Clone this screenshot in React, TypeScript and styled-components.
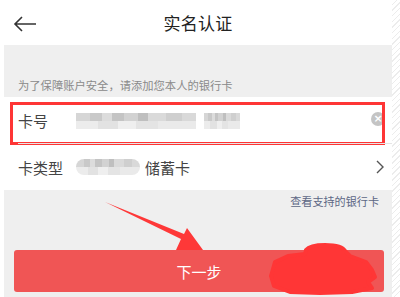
import styled, { createGlobalStyle } from "styled-components";
import { FC } from "react";

const GlobalStyle = createGlobalStyle`
    html, body {
        margin: 0;
        padding: 0;
        background: #ffffff;
    }
    body {
        font-family: "Noto Sans CJK SC", "Noto Sans", sans-serif;
    }
`;

const Frame = styled.div`
    position: relative;
    display: flex;
    width: 400px;
    height: 297px;
    overflow: hidden;
    background: #ffffff;
`;

const Gutter = styled.div`
    width: 4px;
    background: #ffffff;
`;

const Hatch = styled.div`
    width: 8px;
    background: repeating-linear-gradient(135deg, #ffffff 0 3px, #ececec 3px 4px);
`;

const Screen = styled.div`
    flex: 1;
    display: flex;
    flex-direction: column;
    background: #efefef;
`;

const Header = styled.div`
    height: 45px;
    display: flex;
    align-items: center;
    justify-content: center;
    position: relative;
    background: #ffffff;
`;

const Back = styled.svg`
    position: absolute;
    left: 9px;
    top: 15px;
`;

const Title = styled.h1`
    margin: 0;
    font-size: 17px;
    font-weight: 400;
    color: #222;
    letter-spacing: 0.2px;
`;

const Notice = styled.div`
    height: 52px;
    display: flex;
    align-items: flex-end;
    padding: 0 0 4px 14px;
    box-sizing: border-box;
    font-size: 11.3px;
    color: #8a8a8a;
`;

const Form = styled.div`
    background: #ffffff;
`;

const Row = styled.div<{ $h: number; $divider?: boolean }>`
    position: relative;
    height: ${p => p.$h}px;
    display: flex;
    align-items: center;
    padding: 0 8px 0 14px;
    box-sizing: border-box;
    &::after {
        content: "";
        display: ${p => (p.$divider ? "block" : "none")};
        position: absolute;
        left: 14px;
        right: 0;
        bottom: 0;
        height: 1px;
        background: #e6e6e6;
    }
`;

const Label = styled.span`
    width: 58px;
    font-size: 15px;
    color: #444;
`;

const Value = styled.span`
    font-size: 15px;
    color: #444;
    margin-left: 5px;
`;

const Mosaic = styled.div<{ $w: number; $round?: boolean }>`
    width: ${p => p.$w}px;
    height: 16px;
    border-radius: ${p => (p.$round ? "8px" : "0")};
    background:
        linear-gradient(to right,
            #d6d6d6 0 12%, #c9c9c9 12% 22%, #dcdcdc 22% 30%, #c4c4c4 30% 40%,
            #d2d2d2 40% 52%, #bfbfbf 52% 60%, #dadada 60% 75%, #cfcfcf 75% 88%, #d9d9d9 88% 100%) top / 100% 50% no-repeat,
        linear-gradient(to right,
            #ececec 0 18%, #e2e2e2 18% 35%, #efefef 35% 50%, #e4e4e4 50% 68%, #eaeaea 68% 100%) bottom / 100% 50% no-repeat;
    filter: blur(0.6px);
`;

const Gap = styled.div`
    width: 8px;
`;

const Spacer = styled.div`
    flex: 1;
`;

const Clear = styled.div`
    width: 14px;
    height: 14px;
    border-radius: 50%;
    background: #c4c4c4;
    color: #fff;
    font-size: 11px;
    line-height: 14px;
    text-align: center;
    font-family: "DejaVu Sans", sans-serif;
    font-weight: bold;
    margin-right: -1px;
    margin-top: -4px;
`;

const Highlight = styled.div`
    position: absolute;
    left: 6px;
    right: 7px;
    top: 5px;
    bottom: -1px;
    border: 3px solid #fe3535;
    pointer-events: none;
`;

const Footer = styled.div`
    flex: 1;
    display: flex;
    flex-direction: column;
    padding: 3px 8px 0 10px;
`;

const Link = styled.div`
    align-self: flex-end;
    margin-right: 5px;
    font-size: 11.1px;
    color: #5d6785;
`;

const Button = styled.button`
    margin-top: 41px;
    height: 42px;
    border: 0;
    border-radius: 3px;
    background: #f05555;
    color: #ffffff;
    font-family: inherit;
    font-size: 15px;
`;

const Overlay = styled.svg`
    position: absolute;
    left: 0;
    top: 0;
    pointer-events: none;
`;

const Chevron: FC = () => (
    <svg width="8" height="14" viewBox="0 0 8 14">
        <path d="M1 1 L7 7 L1 13" fill="none" stroke="#555" strokeWidth="1.4" />
    </svg>
);

const App: FC = () => {
    return (
        <Frame>
            <GlobalStyle />
            <Gutter />
            <Screen>
                <Header>
                    <Back width="24" height="18" viewBox="0 0 24 18">
                        <path d="M23 9 H3 M9 2 L2 9 L9 16" fill="none" stroke="#333" strokeWidth="1.6" />
                    </Back>
                    <Title>实名认证</Title>
                </Header>
                <Notice>为了保障账户安全，请添加您本人的银行卡</Notice>
                <Form>
                    <Row $h={47} $divider>
                        <Label>卡号</Label>
                        <Mosaic $w={120} />
                        <Gap />
                        <Mosaic $w={36} />
                        <Spacer />
                        <Clear>×</Clear>
                        <Highlight />
                    </Row>
                    <Row $h={46}>
                        <Label>卡类型</Label>
                        <Mosaic $w={64} $round />
                        <Value>储蓄卡</Value>
                        <Spacer />
                        <Chevron />
                    </Row>
                </Form>
                <Footer>
                    <Link>查看支持的银行卡</Link>
                    <Button>下一步</Button>
                </Footer>
            </Screen>
            <Hatch />
            <Overlay width="400" height="297" viewBox="0 0 400 297">
                <polygon points="105,202 184,234 187,228 203,250 176,250 181,239" fill="#fe3838" />
                <g fill="#ff3636" stroke="#ff3636" strokeLinejoin="round" strokeLinecap="round">
                    <path d="M306 250 Q310 245 325 245 Q342 245 345 251 L350 256 L366 262 L372 270 L375 277 L368 282 L372 288 L352 292 L320 293 L290 292 L274 286 L271 276 L275 262 L288 256 L305 254 Z" strokeWidth="4" />
                </g>
            </Overlay>
        </Frame>
    );
};

export default App;
